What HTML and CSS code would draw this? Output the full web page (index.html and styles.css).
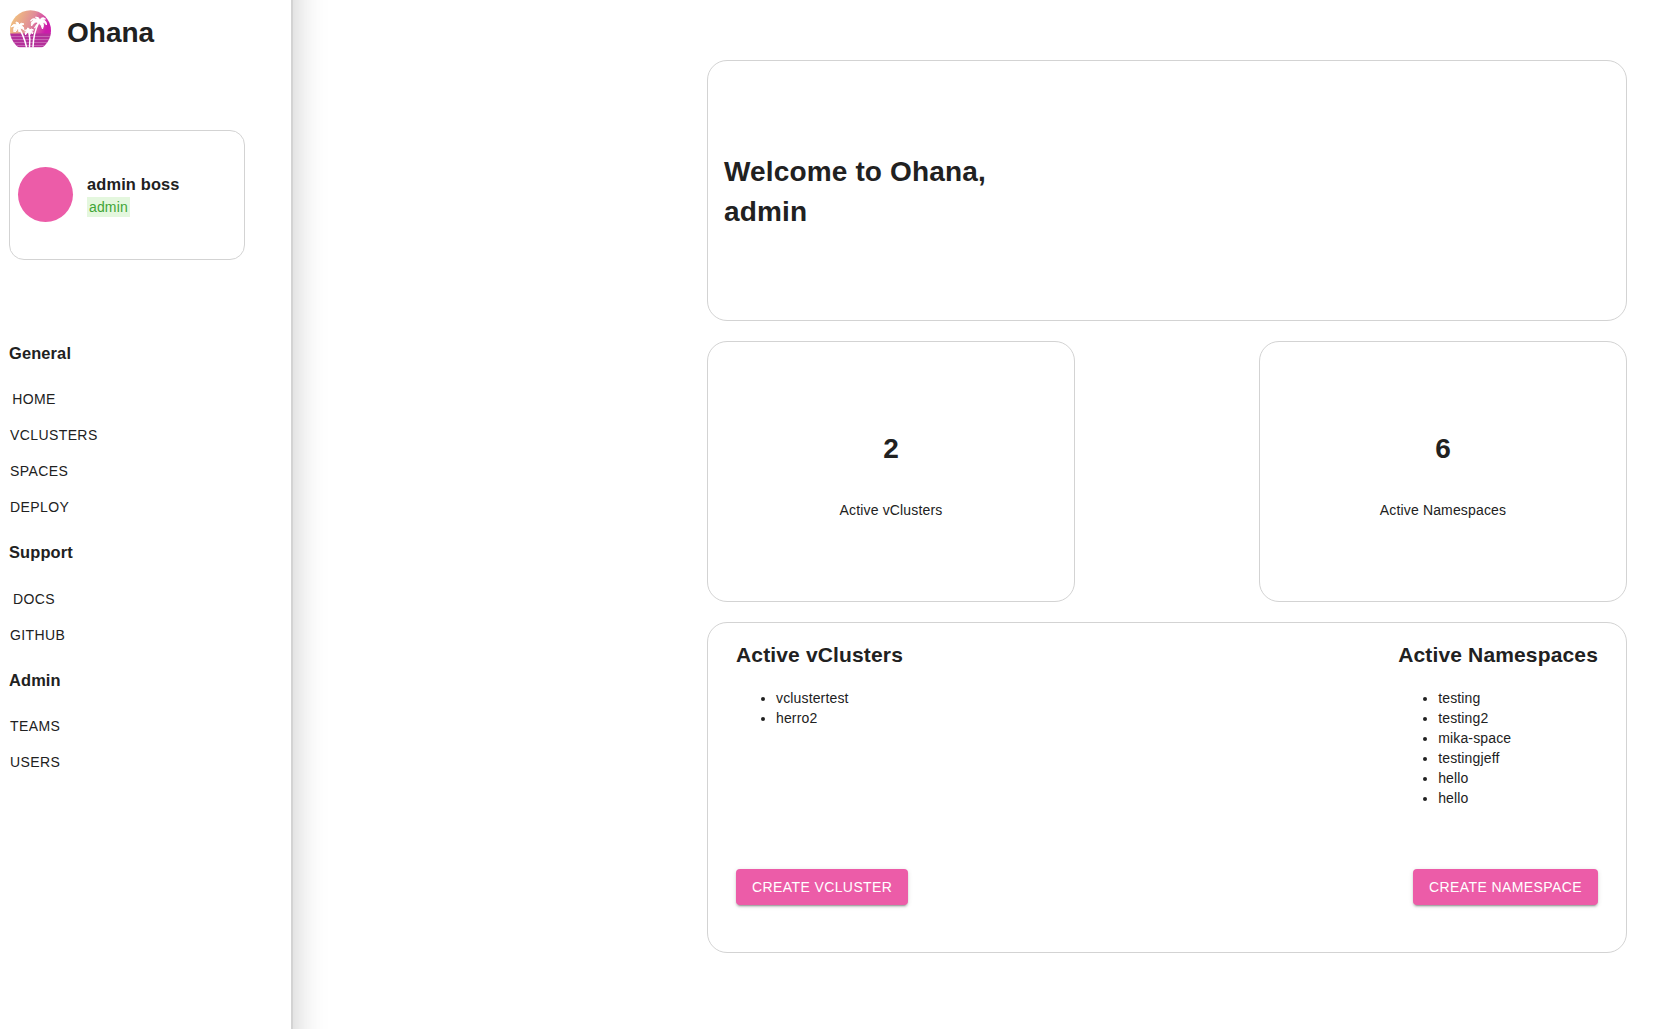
FILE: index.html
```html
<!DOCTYPE html>
<html lang="en">
<head>
    <meta charset="UTF-8">
    <meta name="viewport" content="width=device-width, initial-scale=1.0">
    <title>Ohana</title>
    <link rel="stylesheet" href="styles.css">
</head>
<body>
    <div class="app">
        <aside class="sidebar">
            <div class="brand">
                <svg class="logo" viewBox="0 0 42 38" width="42" height="38">
                    <defs>
                        <linearGradient id="sky" x1="0" y1="0.1" x2="1" y2="0.35">
                            <stop offset="0.1" stop-color="#f2c47c"/>
                            <stop offset="0.6" stop-color="#e08c98"/>
                            <stop offset="1" stop-color="#cc1cac"/>
                        </linearGradient>
                        <clipPath id="sun">
                            <circle cx="21.5" cy="20.7" r="20.5"/>
                        </clipPath>
                    </defs>
                    <g clip-path="url(#sun)">
                        <rect width="42" height="24" fill="url(#sky)"/>
                        <rect y="23.5" width="42" height="13.7" fill="#b4309a"/>
                        <path d="M0 26.5h42M0 29.5h42M0 32.5h42M0 35.5h42" stroke="#d58cc6" stroke-width="0.6"/>
                    </g>
                    <!-- palm trunks -->
                    <g fill="none" stroke="#fff" stroke-linecap="round">
                        <path d="M10 18q5 8 7.5 19M29.5 13q-5 10-5.5 24M20 23q1.5 6 0.5 14" stroke-width="1.5"/>
                    </g>
                    <!-- palm leaves -->
                    <g fill="#fff" stroke="#fff" stroke-width="1" stroke-linejoin="round">
                        <path d="M29.5 13q-3-3-7 3q-1-5 3-6q-2-1-4 1q2-4 7-1q-1-2-2-3q4 0 4 3q3-4 6-1q-2 0-3 1q4 0 4 5q-2-3-4-3q2 3 0 7q-1-5-4-6q-1 3-4 5q1-3 4-5z"/>
                        <path d="M10 18q-3-1-5 4q-1-4 1-6q-2 0-4 1q2-4 6-2q-1-2-1-3q3 0 3 3q2-3 5-1q-2 1-3 2q3 0 3 4q-2-2-4-2q1 3-1 4q0-3-2-4q0 3-2 4q1-3 4-4z"/>
                        <path d="M19.5 22q-2 0-3 3q-1-3 1-4q-1-1-2 0q1-2 3-1q0-1 0-2q2 0 2 2q2-2 4 0q-1 0-2 1q2 1 1 3q-1-2-2-2q1 2-1 3q0-2-1-3z"/>
                    </g>
                </svg>
                <h1 class="brand-name">Ohana</h1>
            </div>

            <div class="profile">
                <div class="avatar"></div>
                <div class="profile-info">
                    <div class="profile-name">admin boss</div>
                    <span class="role">admin</span>
                </div>
            </div>

            <nav class="menu">
                <h3 class="menu-title">General</h3>
                <button class="menu-item">Home</button>
                <button class="menu-item">vClusters</button>
                <button class="menu-item">Spaces</button>
                <button class="menu-item">Deploy</button>
                <h3 class="menu-title">Support</h3>
                <button class="menu-item">Docs</button>
                <button class="menu-item">GitHub</button>
                <h3 class="menu-title">Admin</h3>
                <button class="menu-item">Teams</button>
                <button class="menu-item">Users</button>
            </nav>
        </aside>

        <main class="content">
            <section class="card welcome">
                <h1>Welcome to Ohana,<br>admin</h1>
            </section>

            <div class="stats">
                <section class="card stat">
                    <h1>2</h1>
                    <p>Active vClusters</p>
                </section>
                <section class="card stat">
                    <h1>6</h1>
                    <p>Active Namespaces</p>
                </section>
            </div>

            <section class="card overview">
                <div class="lists">
                    <div>
                        <h2>Active vClusters</h2>
                        <ul>
                            <li>vclustertest</li>
                            <li>herro2</li>
                        </ul>
                    </div>
                    <div>
                        <h2>Active Namespaces</h2>
                        <ul>
                            <li>testing</li>
                            <li>testing2</li>
                            <li>mika-space</li>
                            <li>testingjeff</li>
                            <li>hello</li>
                            <li>hello</li>
                        </ul>
                    </div>
                </div>
                <div class="actions">
                    <button class="btn">Create vCluster</button>
                    <button class="btn">Create Namespace</button>
                </div>
            </section>
        </main>
    </div>
</body>
</html>
```

FILE: styles.css
```css
* {
    box-sizing: border-box;
}
body {
    margin: 0;
    font-family: "Liberation Sans", Arial, sans-serif;
    font-size: 14px;
    line-height: 1.43;
    letter-spacing: 0.15px;
    color: #212121;
    background-color: #fff;
}
h1 {
    font-size: 28px;
    line-height: 40px;
}
h2 {
    font-size: 21px;
    line-height: 30px;
}
button {
    font-family: inherit;
    font-size: 14px;
    line-height: 24px;
    letter-spacing: 0.4px;
    text-transform: uppercase;
    border: none;
    cursor: pointer;
}
.app {
    display: flex;
    justify-content: space-between;
    height: 100vh;
    overflow: hidden;
}

/* sidebar, runs past the window so the shadow stays even */
.sidebar {
    width: 293px;
    height: calc(100vh + 80px);
    margin-top: -40px;
    padding: 50px 0 0 9px;
    border-right: 2px solid #d3d3d3;
    box-shadow: 0 0 32px #c8c8c8;
}
.brand {
    display: flex;
    height: 44px;
}
.logo {
    flex: none;
}
.brand-name {
    margin: 3px 0 0 16px;
    letter-spacing: 0;
}
.profile {
    display: flex;
    align-items: center;
    width: 236px;
    height: 130px;
    margin-top: 76px;
    padding: 0 8px 2px;
    border: 1px solid #d3d3d3;
    border-radius: 15px;
}
.avatar {
    width: 55px;
    height: 55px;
    border-radius: 50%;
    background-color: #ec5ca8;
}
.profile-info {
    margin-left: 14px;
}
.profile-name {
    margin-bottom: 1px;
    font-size: 16.4px;
    font-weight: bold;
    line-height: 24px;
}
.role {
    display: block;
    width: 43px;
    padding: 0 2px;
    line-height: 20px;
    color: #3fa535;
    background-color: #e4f7de;
}
.menu {
    display: flex;
    flex-direction: column;
    align-items: flex-start;
    padding-top: 65px;
}
.menu-title {
    margin: 16px 0;
    font-size: 16.4px;
    line-height: 24px;
}
.menu-item + .menu-title {
    margin-top: 15px;
}
.menu-item {
    min-width: 64px;
    height: 36px;
    margin-left: -7px;
    padding: 6px 8px;
    color: #212121;
    background: none;
}
.menu-item:nth-of-type(5) {
    margin-top: 1px;
}

/* dashboard */
.content {
    display: flex;
    flex-direction: column;
    gap: 20px;
    width: 920px;
    margin: 60px 26px 0 0;
}
.card {
    border: 1px solid #d3d3d3;
    border-radius: 20px;
}
.welcome {
    display: flex;
    align-items: center;
    height: 261px;
    padding: 2px 0 0 16px;
}
.stats {
    display: flex;
    justify-content: space-between;
}
.stat {
    display: flex;
    flex-direction: column;
    align-items: center;
    justify-content: center;
    width: 40%;
    height: 261px;
    padding-top: 7px;
}
.stat h1 {
    margin: 0 0 31px;
}
.stat p {
    margin: 0;
}
.overview {
    height: 331px;
    padding: 17px 28px 0;
}
.lists {
    display: flex;
    justify-content: space-between;
    height: 229px;
}
.lists h2 {
    margin: 0 0 18px;
}
.lists ul {
    margin: 0;
    padding-left: 40px;
}
.actions {
    display: flex;
    justify-content: space-between;
}
.btn {
    height: 36px;
    padding: 6px 16px;
    color: #fff;
    background-color: #ec5ca8;
    border-radius: 4px;
    box-shadow: 0 3px 1px -2px rgba(0, 0, 0, 0.2), 0 2px 2px 0 rgba(0, 0, 0, 0.14), 0 1px 5px 0 rgba(0, 0, 0, 0.12);
}
```
